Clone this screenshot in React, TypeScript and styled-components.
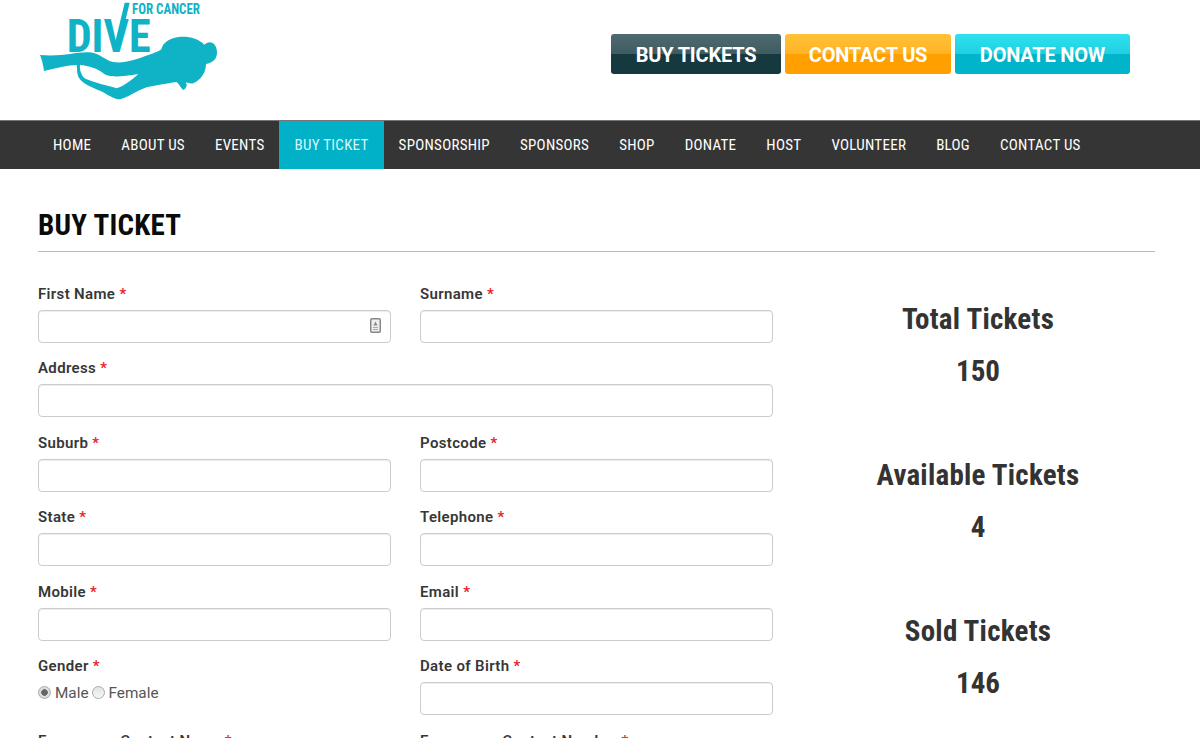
import styled, { createGlobalStyle } from 'styled-components';

const GlobalStyle = createGlobalStyle`
  html, body {
    margin: 0;
    padding: 0;
    background: #fff;
    height: 738px;
    overflow: hidden;
    font-family: Roboto, "Liberation Sans", sans-serif;
    color: #333;
  }
  * { box-sizing: border-box; }
`;

const Header = styled.header`
  height: 120px;
  padding: 0 70px 0 20px;
  display: flex;
  justify-content: space-between;
`;

const LogoSvg = styled.svg`
  width: 220px;
  height: 110px;
  display: block;
`;

const HeaderButtons = styled.div`
  display: flex;
  gap: 4px;
  padding-top: 34px;
`;

const palette = {
  dark: ['#4f6b72', '#3f5a61', '#15393f'],
  orange: ['#ffc239', '#ffb324', '#ff9f00'],
  cyan: ['#2fe0ee', '#20d0e2', '#00b4c9'],
};

const HeaderButton = styled.a<{ $tone: keyof typeof palette; $width: number }>`
  width: ${(p) => p.$width}px;
  height: 40px;
  padding-top: 1px;
  border-radius: 3px;
  display: flex;
  align-items: center;
  justify-content: center;
  color: #fff;
  font-size: 20px;
  font-weight: 700;
  letter-spacing: -0.2px;
  background: linear-gradient(
    ${(p) => palette[p.$tone][0]} 0,
    ${(p) => palette[p.$tone][1]} 50%,
    ${(p) => palette[p.$tone][2]} 50%,
    ${(p) => palette[p.$tone][2]} 100%
  );
`;

const Nav = styled.nav`
  height: 49px;
  padding-left: 38px;
  display: flex;
  background: #353535;
  border-top: 1px solid #777;
`;

const NavItem = styled.a<{ $active?: boolean }>`
  padding: 0 15px;
  display: flex;
  align-items: center;
  color: ${(p) => (p.$active ? '#d8f6fa' : '#fff')};
  background: ${(p) => (p.$active ? '#00b1c7' : 'transparent')};
  font-size: 15px;
  font-stretch: 80%;
  letter-spacing: 0.28px;
`;

const Main = styled.main`
  padding: 39px 45px 0 38px;
`;

const Title = styled.h1`
  margin: 0 0 32.75px;
  padding-bottom: 9px;
  height: 44px;
  border-bottom: 1px solid #bbb;
  color: #0b0b0b;
  font-size: 29px;
  line-height: 34px;
  font-weight: 700;
  font-stretch: 75%;
  letter-spacing: 0.25px;
`;

const Columns = styled.div`
  display: flex;
`;

const Form = styled.form`
  flex: 0 0 735px;
  display: grid;
  grid-template-columns: 353px 353px;
  column-gap: 29px;
  row-gap: 16.5px;
`;

const Field = styled.div<{ $wide?: boolean }>`
  grid-column: ${(p) => (p.$wide ? '1 / span 2' : 'auto')};
  position: relative;
`;

const Label = styled.label`
  display: block;
  height: 25px;
  font-size: 15px;
  line-height: 18px;
  font-weight: 600;
  letter-spacing: 0.35px;
  color: #373737;
`;

const Required = styled.span`
  color: #e8202a;
`;

const TextInput = styled.input`
  display: block;
  width: 100%;
  height: 33px;
  border: 1px solid #ccc;
  border-radius: 4px;
  background: #fff;
  outline: none;
  box-shadow: inset 0 1px 1px rgba(0, 0, 0, 0.075);
`;

const AutofillIcon = styled.svg`
  position: absolute;
  right: 10px;
  top: 33px;
  width: 11px;
  height: 15px;
`;

const RadioRow = styled.div`
  display: flex;
  align-items: center;
  height: 18px;
  margin-top: 2px;
  font-size: 15.3px;
  color: #555;
`;

const Radio = styled.span<{ $checked?: boolean }>`
  width: 13px;
  height: 13px;
  margin-right: 4px;
  margin-top: -2px;
  border-radius: 50%;
  border: 1px solid #aaa;
  background: ${(p) =>
    p.$checked
      ? 'radial-gradient(circle, #666 0, #666 3px, #ddd 3.5px)'
      : 'linear-gradient(#e4e4e4, #f6f6f6)'};
`;

const RadioLabel = styled.span`
  margin-right: 3px;
`;

const Stats = styled.aside`
  flex: 0 0 410px;
  margin-top: 14px;
  display: flex;
  flex-direction: column;
  gap: 48px;
`;

const Stat = styled.div`
  text-align: center;
  color: #333;
  font-weight: 700;
  font-stretch: 75%;
`;

const StatLabel = styled.div`
  height: 52px;
  font-size: 29px;
  line-height: 40px;
  letter-spacing: 0.25px;
`;

const StatValue = styled.div`
  height: 56px;
  font-size: 29px;
  line-height: 40px;
`;

const LogoSmallText = styled.text`
  font-family: Roboto, sans-serif;
  font-weight: 700;
  font-size: 42px;
  font-stretch: 75%;
`;

const LogoBigText = styled.text`
  font-family: Roboto, sans-serif;
  font-weight: 700;
  font-size: 140px;
  font-stretch: 75%;
`;

const navItems = ['HOME', 'ABOUT US', 'EVENTS', 'BUY TICKET', 'SPONSORSHIP', 'SPONSORS', 'SHOP', 'DONATE', 'HOST', 'VOLUNTEER', 'BLOG', 'CONTACT US'];

const fields: { label: string; wide?: boolean }[] = [
  { label: 'Surname' },
  { label: 'Address', wide: true },
  { label: 'Suburb' },
  { label: 'Postcode' },
  { label: 'State' },
  { label: 'Telephone' },
  { label: 'Mobile' },
  { label: 'Email' },
];

const stats = [
  { label: 'Total Tickets', value: 150 },
  { label: 'Available Tickets', value: 4 },
  { label: 'Sold Tickets', value: 146 },
];

function Logo() {
  return (
    <LogoSvg viewBox="0 0 660 330">
      <g fill="#10b3c6">
        <LogoSmallText x="336" y="42" textLength="204" lengthAdjust="spacingAndGlyphs">FOR CANCER</LogoSmallText>
        <LogoBigText x="140" y="155" textLength="252" lengthAdjust="spacingAndGlyphs">DIVE</LogoBigText>
        <path d="M314 8h15l-30 125h-15z" />
        <path
          fillRule="evenodd"
          d="M60 165C90 168 125 166 150 162C175 158 200 155 218 158C240 162 255 180 280 186C310 192 350 178 385 165C400 160 415 155 424 148C428 130 445 116 475 111C505 108 535 115 553 134C562 124 578 124 584 134C592 145 594 165 586 176C578 186 566 190 558 192C558 215 545 238 520 250C510 252 502 248 498 246C502 255 500 265 490 270C480 262 478 250 468 246C445 250 410 255 380 262C350 272 325 292 300 298C280 298 262 282 240 272C215 262 185 250 175 230C170 218 172 205 170 195C145 195 105 205 72 213C70 195 66 180 60 165ZM180 194C205 198 235 205 250 220C262 232 300 232 355 222C335 240 312 258 290 265C265 258 225 248 200 238C186 232 178 212 180 194Z"
        />
      </g>
    </LogoSvg>
  );
}

export default function App() {
  return (
    <>
      <GlobalStyle />
      <Header>
        <Logo />
        <HeaderButtons>
          <HeaderButton $tone="dark" $width={170}>BUY TICKETS</HeaderButton>
          <HeaderButton $tone="orange" $width={166}>CONTACT US</HeaderButton>
          <HeaderButton $tone="cyan" $width={175}>DONATE NOW</HeaderButton>
        </HeaderButtons>
      </Header>
      <Nav>
        {navItems.map((item) => (
          <NavItem key={item} $active={item === 'BUY TICKET'}>{item}</NavItem>
        ))}
      </Nav>
      <Main>
        <Title>BUY TICKET</Title>
        <Columns>
          <Form>
            <Field>
              <Label>First Name <Required>*</Required></Label>
              <TextInput />
              <AutofillIcon viewBox="0 0 11 15">
                <rect x="0.75" y="0.75" width="9.5" height="13.5" rx="1" fill="#eee" stroke="#888" strokeWidth="1.5" />
                <path d="M5.5 3.5 7.5 7.5H3.5Z" fill="#888" />
                <path d="M3 9h5v1H3zM3 11h5v1H3z" fill="#aaa" />
              </AutofillIcon>
            </Field>
            {fields.map((f) => (
              <Field key={f.label} $wide={f.wide}>
                <Label>{f.label} <Required>*</Required></Label>
                <TextInput />
              </Field>
            ))}
            <Field>
              <Label>Gender <Required>*</Required></Label>
              <RadioRow>
                <Radio $checked />
                <RadioLabel>Male</RadioLabel>
                <Radio />
                <RadioLabel>Female</RadioLabel>
              </RadioRow>
            </Field>
            <Field>
              <Label>Date of Birth <Required>*</Required></Label>
              <TextInput />
            </Field>
            <Field>
              <Label>Emergency Contact Name <Required>*</Required></Label>
              <TextInput />
            </Field>
            <Field>
              <Label>Emergency Contact Number <Required>*</Required></Label>
              <TextInput />
            </Field>
          </Form>
          <Stats>
            {stats.map((s) => (
              <Stat key={s.label}>
                <StatLabel>{s.label}</StatLabel>
                <StatValue>{s.value}</StatValue>
              </Stat>
            ))}
          </Stats>
        </Columns>
      </Main>
    </>
  );
}
